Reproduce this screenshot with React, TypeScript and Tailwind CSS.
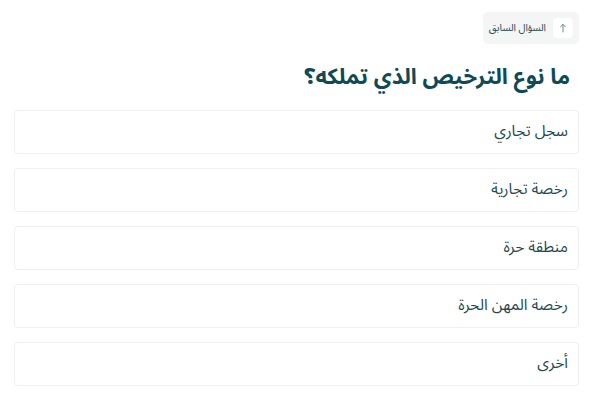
import React from "react";

const options = ["سجل تجاري", "رخصة تجارية", "منطقة حرة", "رخصة المهن الحرة", "أخرى"];

export default function App() {
  return (
    <div
      dir="rtl"
      className="min-h-[397px] w-[592px] bg-white pt-[12px] pl-[14px] pr-[13px]"
      style={{ fontFamily: '"Noto Sans Arabic", "Noto Kufi Arabic", "DejaVu Sans", sans-serif' }}
    >
      <div className="flex justify-start">
        <button className="flex h-[32px] items-center gap-[7px] rounded-[5px] bg-[#f4f5f5] pr-[6px] pl-[6px]">
          <span className="flex h-[20px] w-[20px] items-center justify-center rounded-[4px] bg-white">
            <svg width="10" height="10" viewBox="0 0 10 10" fill="none" stroke="#6b8a90" strokeWidth="1" strokeLinecap="round">
              <path d="M5 9V1.5M2.6 3.8L5 1.4l2.4 2.4" />
            </svg>
          </span>
          <span className="text-[10px] leading-none text-[#1d4a52]">السؤال السابق</span>
        </button>
      </div>
      <h1 className="mt-[14px] pr-[9px] text-[22px] font-bold leading-[38px] text-[#0f4a55]">
        ما نوع الترخيص الذي تملكه؟
      </h1>
      <div className="mt-[14px] flex flex-col gap-[14px]">
        {options.map((o) => (
          <div
            key={o}
            className="flex h-[44px] items-center rounded-[4px] border border-[#efefef] bg-white pr-[10px] text-[15.5px] text-[#1f4a52]"
          >
            {o}
          </div>
        ))}
      </div>
    </div>
  );
}
